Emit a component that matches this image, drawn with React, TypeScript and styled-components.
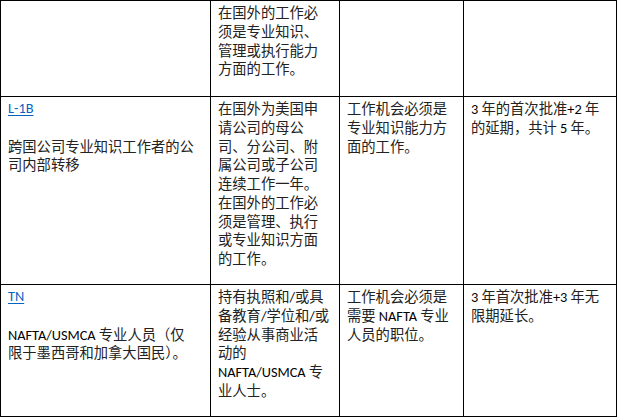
import styled, { createGlobalStyle } from "styled-components";

const GlobalStyle = createGlobalStyle`
    html, body {
        margin: 0;
        padding: 0;
        background: #ffffff;
    }
`;

const Table = styled.table`
    border-collapse: collapse;
    table-layout: fixed;
    width: 616px;
    font-family: Carlito, Lato, "Noto Sans CJK SC", sans-serif;
    font-size: 14.3px;
    line-height: 18.75px;
    color: #111;
`;

const Row = styled.tr<{ $h: number }>`
    height: ${(p) => p.$h}px;
`;

const Cell = styled.td`
    border: 1px solid #000;
    vertical-align: top;
    padding: 2px 7px 0 7px;
    white-space: nowrap;
`;

const Line = styled.div`
    display: flex;
    align-items: baseline;
    height: 18.75px;
    white-space: pre;
`;

const Latin = styled.span`
    line-height: 18.75px;
    color: #000;
`;

const Cjk = styled.span`
    font-family: "Noto Sans CJK SC", sans-serif;
    line-height: 18.75px;
    color: #222;
`;

const VisaLink = styled.a`
    color: #0563c1;
    text-decoration: underline;
    text-underline-offset: 2px;
    line-height: 18.75px;
`;

type RowData = {
    height: number;
    code?: string;
    name: string[];
    req: string[];
    job: string[];
    term: string[];
};

const rows: RowData[] = [
    {
        height: 96,
        name: [],
        req: ["在国外的工作必", "须是专业知识、", "管理或执行能力", "方面的工作。"],
        job: [],
        term: [],
    },
    {
        height: 188,
        code: "L-1B",
        name: ["跨国公司专业知识工作者的公", "司内部转移"],
        req: [
            "在国外为美国申",
            "请公司的母公",
            "司、分公司、附",
            "属公司或子公司",
            "连续工作一年。",
            "在国外的工作必",
            "须是管理、执行",
            "或专业知识方面",
            "的工作。",
        ],
        job: ["工作机会必须是", "专业知识能力方", "面的工作。"],
        term: ["3 年的首次批准+2 年", "的延期，共计 5 年。"],
    },
    {
        height: 132,
        code: "TN",
        name: ["NAFTA/USMCA 专业人员（仅", "限于墨西哥和加拿大国民）。"],
        req: [
            "持有执照和/或具",
            "备教育/学位和/或",
            "经验从事商业活",
            "动的",
            "NAFTA/USMCA 专",
            "业人士。",
        ],
        job: ["工作机会必须是", "需要 NAFTA 专业", "人员的职位。"],
        term: ["3 年首次批准+3 年无", "限期延长。"],
    },
];

// split latin runs from CJK runs so each gets its own font
function Mixed({ text }: { text: string }) {
    const parts = text.split(/([A-Za-z0-9+\/\- ]+)/).filter((s) => s.length > 0);
    return (
        <>
            {parts.map((p, i) =>
                /^[A-Za-z0-9+\/\- ]+$/.test(p) ? <Latin key={i}>{p}</Latin> : <Cjk key={i}>{p}</Cjk>
            )}
        </>
    );
}

function Lines({ lines }: { lines: string[] }) {
    return (
        <>
            {lines.map((l, i) => (
                <Line key={i}>
                    <Mixed text={l} />
                </Line>
            ))}
        </>
    );
}

export default function App() {
    return (
        <>
            <GlobalStyle />
            <Table>
                <colgroup>
                    <col style={{ width: 210 }} />
                    <col style={{ width: 129 }} />
                    <col style={{ width: 124 }} />
                    <col style={{ width: 153 }} />
                </colgroup>
                <tbody>
                    {rows.map((r, i) => (
                        <Row key={i} $h={r.height}>
                            <Cell>
                                {r.code && (
                                    <>
                                        <Line>
                                            <VisaLink href="#">{r.code}</VisaLink>
                                        </Line>
                                        <Line />
                                    </>
                                )}
                                <Lines lines={r.name} />
                            </Cell>
                            <Cell>
                                <Lines lines={r.req} />
                            </Cell>
                            <Cell>
                                <Lines lines={r.job} />
                            </Cell>
                            <Cell>
                                <Lines lines={r.term} />
                            </Cell>
                        </Row>
                    ))}
                </tbody>
            </Table>
        </>
    );
}
